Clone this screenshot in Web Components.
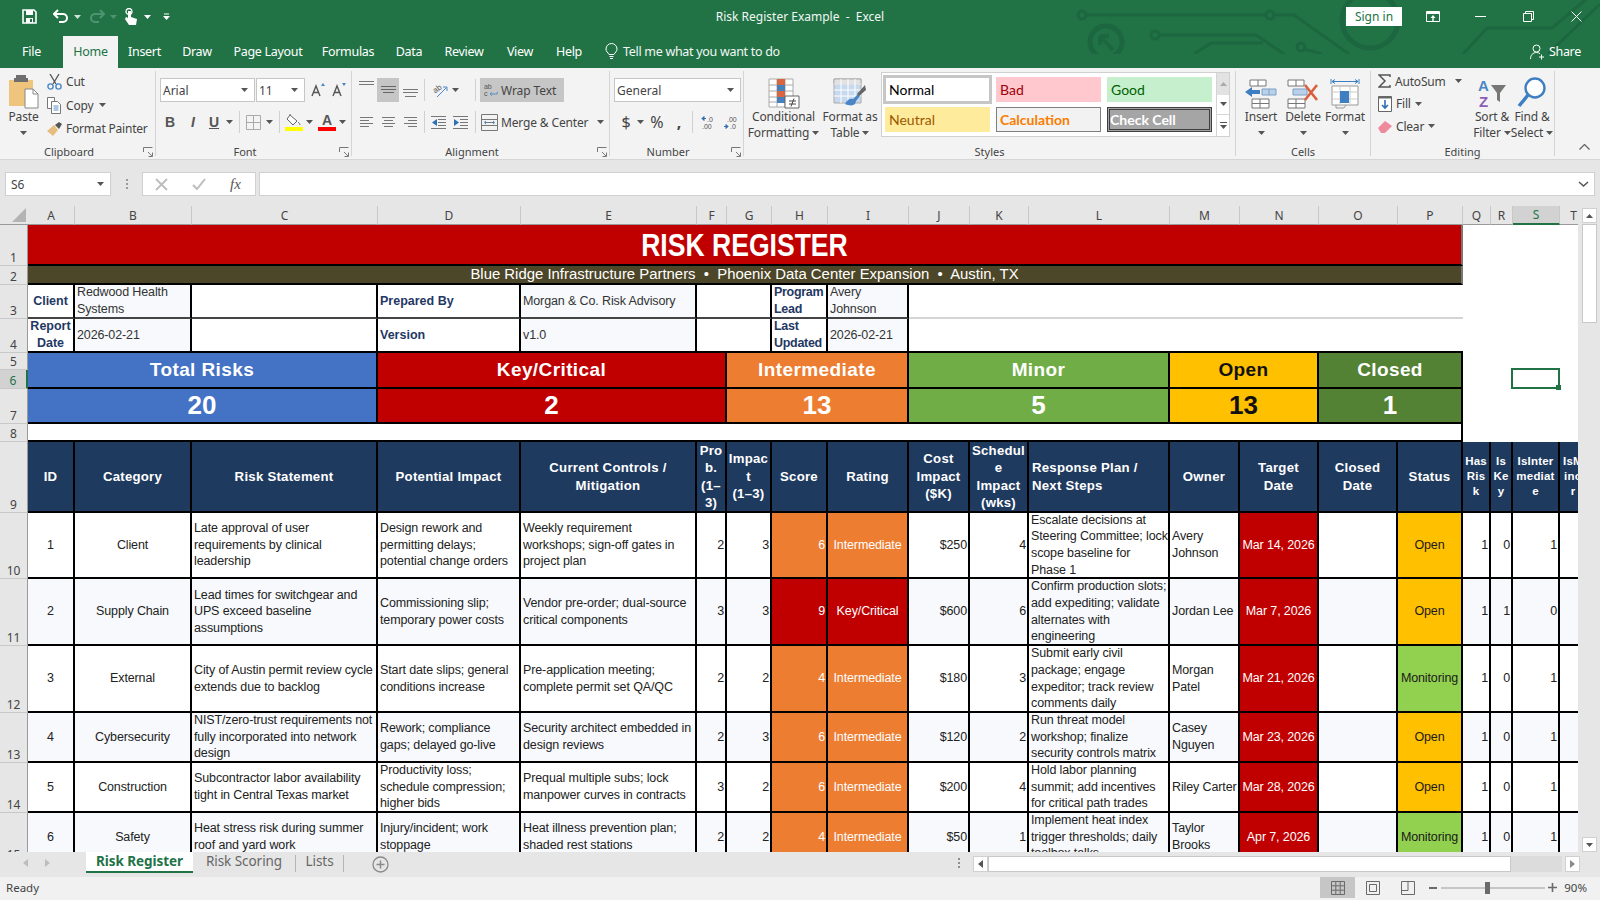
<!DOCTYPE html>
<html lang="en">
<head>
<meta charset="utf-8">
<title>Risk Register Example - Excel</title>
<style>
  html, body { margin: 0; height: 100%; }
  body {
    width: 1600px;
    height: 900px;
    overflow: hidden;
    display: flex;
    flex-direction: column;
    background: #e6e6e6;
    font-family: "Noto Sans", "Liberation Sans", sans-serif;
  }
</style>
</head>
<body>
<excel-header></excel-header>
<excel-ribbon></excel-ribbon>
<excel-formula-bar></excel-formula-bar>
<excel-sheet></excel-sheet>
<excel-sheet-tabs></excel-sheet-tabs>
<excel-status-bar></excel-status-bar>

<script>
const UI_FONT = '"Noto Sans", "Liberation Sans", sans-serif';
const caret = (color = '#555') => `<svg width="7" height="4" viewBox="0 0 7 4"><path d="M0 0h7L3.5 4z" fill="${color}"/></svg>`;

/** Green title row and tab row */
class ExcelHeader extends HTMLElement {
  shadowRoot = this.attachShadow({ mode: 'open' });

  connectedCallback () {
    const tabs = [['File', 63], ['Home', 55], ['Insert', 53], ['Draw', 52], ['Page Layout', 90], ['Formulas', 70], ['Data', 52], ['Review', 58], ['View', 54], ['Help', 44]];
    this.shadowRoot.innerHTML = `
    <style>
      :host { display: block; flex: none; height: 68px; background: #217346; position: relative; color: #fff; font: 12.5px ${UI_FONT}; }
      .pattern { position: absolute; left: 1060px; top: 0; pointer-events: none; }
      .top { height: 33px; display: flex; align-items: center; position: relative; }
      .qat { display: flex; align-items: center; padding-left: 21px; height: 33px; }
      .qat svg { display: block; flex: none; }
      .title { position: absolute; left: 0; right: 0; text-align: center; font-size: 12px; color: #f2f7f4; white-space: pre; }
      .win { margin-left: auto; display: flex; align-items: center; height: 33px; position: relative; }
      .signin { width: 56px; height: 19px; background: #fff; color: #217346; font-size: 12px; line-height: 19px; text-align: center; }
      .win svg { display: block; }
      .tabs { height: 35px; display: flex; position: relative; letter-spacing: -.3px; }
      .tab { height: 32px; margin-top: 3px; padding-bottom: 1px; box-sizing: border-box; display: flex; align-items: center; justify-content: center; }
      .tab.active { background: #f3f3f3; color: #217346; }
      .tell { display: flex; align-items: center; gap: 5px; margin-left: 14px; margin-top: 2px; margin-bottom: 1px; color: #f2f7f4; }
      .share { margin-left: auto; margin-right: 19px; margin-top: 2px; display: flex; align-items: center; gap: 4px; }
    </style>
    <svg class="pattern" width="540" height="54" viewBox="0 0 540 54" fill="none" stroke="#1c673f" stroke-width="3">
      <circle cx="22" cy="15" r="4"/><path d="M26 15H206"/><circle cx="210" cy="15" r="4"/><path d="M214 15H234L289 54"/>
      <circle cx="46" cy="42" r="16" stroke-width="5"/><path d="M40 36L53 50M40 36h9M40 36v9" stroke-width="4"/>
      <circle cx="95" cy="35" r="4"/><path d="M99 35H196L224 54"/><circle cx="241" cy="47" r="4"/><path d="M134 54L151 43H203M244 49L262 54"/>
      <circle cx="310" cy="20" r="28" stroke-width="5"/>
      <path d="M403 54L427 28H492L530 -4M488 54L540 4"/>
    </svg>
    <div class="top">
      <div class="qat">
        <svg width="17" height="17" viewBox="0 0 17 17"><path d="M2 2h11l2 2v11H2z" fill="none" stroke="#fff" stroke-width="1.6"/><path d="M5 2h7v5H5z M5 10h7v5H5z" fill="#fff"/><path d="M9 11h2v3H9z" fill="#217346"/></svg>
        <svg style="margin-left:15px" width="16" height="15" viewBox="0 0 16 15"><path d="M5 1L1 5l4 4M1 5h9a4 4 0 0 1 0 8H6" fill="none" stroke="#fff" stroke-width="2"/></svg>
        <span style="margin-left:5px;display:flex">${caret('#cfe3d7')}</span>
        <svg style="margin-left:8px" width="16" height="15" viewBox="0 0 16 15"><path d="M11 1l4 4-4 4M15 5H6a4 4 0 0 0 0 8h4" fill="none" stroke="#4f9470" stroke-width="2"/></svg>
        <span style="margin-left:5px;display:flex">${caret('#4f9470')}</span>
        <svg style="margin-left:7px" width="14" height="18" viewBox="0 0 14 18"><circle cx="5" cy="3.5" r="3" fill="none" stroke="#fff" stroke-width="1.3"/><path d="M4 3v7L2 9 1 11l4 6h7l1-6-6-2V3z" fill="#fff"/></svg>
        <span style="margin-left:6px;display:flex">${caret('#fff')}</span>
        <svg style="margin-left:12px" width="7" height="7" viewBox="0 0 7 7"><path d="M1 1h5" stroke="#fff"/><path d="M0 3h7L3.5 7z" fill="#fff"/></svg>
      </div>
      <div class="title">Risk Register Example  -  Excel</div>
      <div class="win">
        <div class="signin">Sign in</div>
        <svg style="margin-left:24px" width="14" height="11" viewBox="0 0 14 11"><path d="M.5.5h13v10H.5z" fill="none" stroke="#fff"/><path d="M1 1h12v2H1z" fill="#fff"/><path d="M7 4L4.5 7h1.8v3h1.4V7h1.8z" fill="#fff"/></svg>
        <svg style="margin-left:35px" width="11" height="1" viewBox="0 0 11 1"><path d="M0 .5h11" stroke="#fff"/></svg>
        <svg style="margin-left:37px" width="11" height="11" viewBox="0 0 11 11"><path d="M.5 2.5h8v8h-8zM2.5 2.5v-2h8v8h-2" fill="none" stroke="#fff"/></svg>
        <svg style="margin-left:37px;margin-right:18px" width="11" height="11" viewBox="0 0 11 11"><path d="M.5.5l10 10M10.5.5l-10 10" stroke="#fff" fill="none"/></svg>
      </div>
    </div>
    <div class="tabs">
      ${tabs.map(([label, width]) => `<div class="tab${label === 'Home' ? ' active' : ''}" style="width:${width}px">${label}</div>`).join('')}
      <div class="tell">
        <svg width="13" height="17" viewBox="0 0 13 17"><path d="M4 11.5C3 9.5 1 8.5 1 6a5.5 5.5 0 0 1 11 0c0 2.5-2 3.5-3 5.5z" fill="none" stroke="#fff"/><path d="M4.5 13.5h4M5 15.5h3" stroke="#fff"/></svg>
        <span>Tell me what you want to do</span>
      </div>
      <div class="share">
        <svg width="15" height="16" viewBox="0 0 15 16"><circle cx="6.5" cy="4.5" r="3.5" fill="none" stroke="#fff"/><path d="M.5 15c0-4 2.5-6.5 6-6.5 1.5 0 2.5.5 3.5 1.2M11.5 10.5v5M9 13h5" fill="none" stroke="#fff"/></svg>
        <span>Share</span>
      </div>
    </div>`;
  }
}
customElements.define('excel-header', ExcelHeader);

/** One labelled group of the ribbon */
class RibbonGroup extends HTMLElement {
  shadowRoot = this.attachShadow({ mode: 'open' });

  connectedCallback () {
    const hasLauncher = this.hasAttribute('launcher');
    const launcher = hasLauncher
      ? `<svg class="launch" width="10" height="10" viewBox="0 0 10 10"><path d="M.5 5V.5H9.5M5 5l4 4M9.5 5.5v4h-4" fill="none" stroke="#777"/></svg>`
      : '';
    this.shadowRoot.innerHTML = `
    <style>
      :host { display: flex; flex-direction: column; flex: none; height: 85px; border-right: 1px solid #d4d4d4; box-sizing: border-box; position: relative; }
      .content { height: 72px; flex: none; }
      .label { height: 13px; line-height: 18px; text-align: center; font-size: 11px; color: #444; padding-right: ${hasLauncher ? 17 : 0}px; }
      .launch { position: absolute; right: 2px; bottom: -1px; }
    </style>
    <div class="content"><slot></slot></div>
    <div class="label">${this.getAttribute('label')}</div>
    ${launcher}`;
  }
}
customElements.define('ribbon-group', RibbonGroup);

/** Large ribbon button: icon above one or two lines of text */
class RibbonBigButton extends HTMLElement {
  shadowRoot = this.attachShadow({ mode: 'open' });

  connectedCallback () {
    const lines = this.getAttribute('text').split('|');
    const second = lines[1] !== undefined
      ? `<div class="ln">${lines[1]} ${caret()}</div>`
      : `<div class="ln">${caret()}</div>`;
    this.shadowRoot.innerHTML = `
    <style>
      :host { display: flex; flex-direction: column; align-items: center; flex: none; height: 72px; color: #444; font-size: 12px; letter-spacing: -.15px; }
      .icon { height: 38px; display: flex; align-items: flex-end; justify-content: center; }
      .ln { height: 16px; line-height: 16px; display: flex; gap: 3px; align-items: center; white-space: nowrap; }
    </style>
    <div class="icon"><slot></slot></div>
    <div class="ln">${lines[0]}</div>
    ${second}`;
  }
}
customElements.define('ribbon-big-button', RibbonBigButton);

/** The Home ribbon */
class ExcelRibbon extends HTMLElement {
  shadowRoot = this.attachShadow({ mode: 'open' });

  connectedCallback () {
    this.shadowRoot.innerHTML = this.getStyles() + `
    <ribbon-group label="Clipboard" launcher style="width:156px">
      <div class="clip">
        <ribbon-big-button text="Paste" style="width:47px">
          <svg width="31" height="34" viewBox="0 0 31 34"><path d="M1 5h24v26H1z" fill="#efc47c"/><path d="M8 3h10V0h-10z M6 3h14v4H6z" fill="#6e6e6e"/><path d="M17 14h8l5 5v14H17z" fill="#fff" stroke="#888"/><path d="M25 14v5h5" fill="none" stroke="#888"/></svg>
        </ribbon-big-button>
        <div class="stack" style="margin-top:-1px">
          <div class="row"><svg width="15" height="16" viewBox="0 0 15 16"><path d="M3 0l6 10M12 0L6 10" stroke="#555" stroke-width="1.3" fill="none"/><circle cx="3.5" cy="12.5" r="2.6" fill="none" stroke="#4a86c5" stroke-width="1.4"/><circle cx="11.5" cy="12.5" r="2.6" fill="none" stroke="#4a86c5" stroke-width="1.4"/></svg>Cut</div>
          <div class="row"><svg width="15" height="17" viewBox="0 0 15 17"><path d="M.5.5h7v11h-7z" fill="#fff" stroke="#777"/><path d="M4.5 4.5h6l3 3v9h-9z" fill="#fff" stroke="#777"/><path d="M6.5 9h5M6.5 11h5M6.5 13h5" stroke="#5b8fc7"/></svg>Copy <span class="car" style="margin-left:2px">${caret()}</span></div>
          <div class="row"><svg width="15" height="14" viewBox="0 0 15 14"><path d="M0 9L7 3l4 5-5 6z" fill="#e6bd7d"/><path d="M8 3l4-3 3 2-3 5z" fill="#555"/></svg>Format Painter</div>
        </div>
      </div>
    </ribbon-group>

    <ribbon-group label="Font" launcher style="width:196px">
      <div class="two">
        <div class="line" style="margin-left:4px">
          <div class="combo" style="width:95px">Arial<i>${caret()}</i></div>
          <div class="combo" style="width:49px;margin-left:1px">11<i>${caret()}</i></div>
          <span class="ic" style="margin-left:6px"><svg width="16" height="14" viewBox="0 0 16 14"><path d="M1 13L5 3l4 10M2.5 9.5h5" fill="none" stroke="#555" stroke-width="1.4"/><path d="M10 3l2-3 2 3z" fill="#4a86c5"/></svg></span>
          <span class="ic" style="margin-left:5px"><svg width="16" height="14" viewBox="0 0 16 14"><path d="M1 13L5 3l4 10M2.5 9.5h5" fill="none" stroke="#555" stroke-width="1.4"/><path d="M10 0l2 3 2-3z" fill="#4a86c5"/></svg></span>
        </div>
        <div class="line" style="margin-left:4px">
          <b class="gl" style="margin-left:3px;width:14px">B</b>
          <i class="gl it" style="margin-left:9px;width:14px">I</i>
          <u class="gl" style="margin-left:7px;width:14px">U</u>
          <span class="car" style="margin-left:5px">${caret()}</span>
          <span class="sep" style="margin-left:6px"></span>
          <span style="margin-left:6px;display:flex"><svg width="15" height="15" viewBox="0 0 15 15"><path d="M.5.5h14v14H.5zM7.5.5v14M.5 7.5h14" fill="none" stroke="#aaa"/></svg></span>
          <span class="car" style="margin-left:5px">${caret()}</span>
          <span class="sep" style="margin-left:6px"></span>
          <span class="stacked" style="margin-left:5px;width:18px"><svg width="16" height="12" viewBox="0 0 16 12"><path d="M4 1l7 6-4 4-6-6zM4 1V0M12 8c1 1 2 2 2 3" fill="#fff" stroke="#666"/></svg><em style="background:#ff0"></em></span>
          <span class="car" style="margin-left:3px">${caret()}</span>
          <span class="stacked" style="margin-left:5px;width:18px"><b style="font:bold 14px/12px 'Liberation Sans';color:#555;height:12px">A</b><em style="background:#f00"></em></span>
          <span class="car" style="margin-left:3px">${caret()}</span>
        </div>
      </div>
    </ribbon-group>

    <ribbon-group label="Alignment" launcher style="width:258px">
      <div class="two">
        <div class="line" style="margin-left:3px">
          <span class="cell-ic"><svg width="15" height="10" viewBox="0 0 15 10" style="margin-bottom:8px"><path d="M0 .5h15M0 3.5h15" stroke="#777"/></svg></span>
          <span class="cell-ic on"><svg width="15" height="10" viewBox="0 0 15 10"><path d="M0 1.5h15M0 4.5h15M2 7.5h11" stroke="#666"/></svg></span>
          <span class="cell-ic"><svg width="15" height="10" viewBox="0 0 15 10" style="margin-top:6px"><path d="M0 1.5h15M0 4.5h15M2 8.5h11" stroke="#777"/></svg></span>
          <span class="sep" style="margin-left:3px"></span>
          <span style="margin-left:6px;display:flex"><svg width="17" height="15" viewBox="0 0 17 15" overflow="visible"><text x="3" y="9" font-size="8" fill="#555" font-family="Liberation Sans" transform="rotate(-35 6 8)">ab</text><path d="M6 14L15 5M12 4h4v4" stroke="#4a86c5" fill="none"/></svg></span>
          <span class="car" style="margin-left:4px">${caret()}</span>
          <span class="sep" style="margin-left:16px"></span>
          <div class="wrap">
            <svg width="15" height="16" viewBox="0 0 17 16"><text x="0" y="6.5" font-size="8" fill="#555" font-family="Liberation Sans">ab</text><text x="0" y="15" font-size="8" fill="#555" font-family="Liberation Sans">c</text><path d="M15 10v2.5H7M9 10.5l-2 2 2 2" stroke="#4a86c5" fill="none"/></svg>
            Wrap Text
          </div>
        </div>
        <div class="line" style="margin-left:3px">
          <span class="cell-ic"><svg width="15" height="11" viewBox="0 0 15 11"><path d="M1 .5h13M1 3.5h9M1 6.5h13M1 9.5h9" stroke="#777"/></svg></span>
          <span class="cell-ic"><svg width="15" height="11" viewBox="0 0 15 11"><path d="M1 .5h13M3 3.5h9M1 6.5h13M3 9.5h9" stroke="#777"/></svg></span>
          <span class="cell-ic"><svg width="15" height="11" viewBox="0 0 15 11"><path d="M1 .5h13M5 3.5h9M1 6.5h13M5 9.5h9" stroke="#777"/></svg></span>
          <span class="sep" style="margin-left:3px"></span>
          <span style="margin-left:6px;display:flex"><svg width="15" height="13" viewBox="0 0 15 13"><path d="M0 .5h15M7 3.5h8M7 6.5h8M7 9.5h8M0 12.5h15" stroke="#777"/><path d="M6 3v7L1 6.5z" fill="#2f6fb3"/></svg></span>
          <span style="margin-left:7px;display:flex"><svg width="15" height="13" viewBox="0 0 15 13"><path d="M0 .5h15M7 3.5h8M7 6.5h8M7 9.5h8M0 12.5h15" stroke="#777"/><path d="M1 3v7L6 6.5z" fill="#2f6fb3"/></svg></span>
          <span class="sep" style="margin-left:7px"></span>
          <span style="margin-left:5px;display:flex"><svg width="17" height="17" viewBox="0 0 17 17"><path d="M.5.5h16v16H.5zM.5 5.5h16M.5 11.5h16M4 8.5h9" fill="none" stroke="#777"/><path d="M3 8.5l2-2v4zM14 8.5l-2-2v4z" fill="#4a86c5"/></svg></span>
          <span class="txt" style="margin-left:3px">Merge &amp; Center</span>
          <span class="car" style="margin-left:9px">${caret()}</span>
        </div>
      </div>
    </ribbon-group>

    <ribbon-group label="Number" launcher style="width:134px">
      <div class="two">
        <div class="line" style="margin-left:4px"><div class="combo" style="width:127px">General<i>${caret()}</i></div></div>
        <div class="line" style="margin-left:9px">
          <span class="sym" style="width:14px">$</span><span class="car" style="margin-left:4px">${caret()}</span>
          <span class="sym" style="margin-left:5px;width:16px">%</span>
          <span class="sym" style="margin-left:9px;width:10px;font-weight:700">,</span>
          <span class="sep" style="margin-left:8px"></span>
          <span style="margin-left:8px;display:flex"><svg width="14" height="15" viewBox="0 0 14 15"><path d="M5 3.5H1M1 3.5l2-2v4z" stroke="#2f6fb3" fill="#2f6fb3"/><text x="6" y="7" font-size="7" fill="#555" font-family="Liberation Sans">.0</text><text x="1" y="14" font-size="7" fill="#555" font-family="Liberation Sans">.00</text></svg></span>
          <span style="margin-left:9px;display:flex"><svg width="14" height="15" viewBox="0 0 14 15"><text x="3" y="7" font-size="7" fill="#555" font-family="Liberation Sans">.00</text><path d="M0 11.5h4M4 11.5l-2-2v4z" stroke="#2f6fb3" fill="#2f6fb3"/><text x="6" y="14" font-size="7" fill="#555" font-family="Liberation Sans">.0</text></svg></span>
        </div>
      </div>
    </ribbon-group>

    <ribbon-group label="Styles" style="width:492px">
      <div class="styles">
        <ribbon-big-button text="Conditional|Formatting" style="width:77px">
          <svg width="32" height="31" viewBox="0 0 32 31"><path d="M1 1h24v28H1zM9 1v28M17 1v28M1 7h24M1 13h24M1 19h24M1 24h24" fill="#fff" stroke="#aaa"/><path d="M9 1h8v6H9z" fill="#d9663f"/><path d="M9 7h8v6H9z" fill="#4a7fbd"/><path d="M9 13h8v6H9z" fill="#d9663f"/><path d="M9 19h8v6H9z" fill="#4a7fbd"/><path d="M17 18h14v12H17z" fill="#fff" stroke="#666"/><path d="M21 23h7M21 26h7M26 20.5l-3 8" stroke="#444" fill="none"/></svg>
        </ribbon-big-button>
        <ribbon-big-button text="Format as|Table" style="width:56px">
          <svg width="34" height="31" viewBox="0 0 34 31"><path d="M1 1h27v24H1z" fill="#c6d9ef" stroke="#aaa"/><path d="M1 1h27v5H1z" fill="#e2e2e2" stroke="#aaa"/><path d="M8 1v24M15 1v24M22 1v24M1 6h27M1 12h27M1 18h27" stroke="#fff" fill="none"/><path d="M12 26c2-5 6-6 8-5l5-5 2 2-4 5c0 4-4 6-11 3z" fill="#4a86c5"/><path d="M24 16l8-9 1 5-7 6z" fill="#666"/></svg>
        </ribbon-big-button>
        <div class="gallery">
          <div class="grid">
            <div class="st normal">Normal</div><div class="st bad">Bad</div><div class="st good">Good</div>
            <div class="st neutral">Neutral</div><div class="st calc">Calculation</div><div class="st check">Check Cell</div>
          </div>
          <div class="scroller">
            <div style="height:23px;background:#e2e2e2"><svg width="7" height="4" viewBox="0 0 7 4"><path d="M0 4h7L3.5 0z" fill="#aaa"/></svg></div>
            <div style="height:19px">${caret()}</div>
            <div style="height:22px;border-top:1px solid #d4d4d4"><svg width="7" height="7" viewBox="0 0 7 7"><path d="M0 .5h7" stroke="#555"/><path d="M0 3h7L3.5 7z" fill="#555"/></svg></div>
          </div>
        </div>
      </div>
    </ribbon-group>

    <ribbon-group label="Cells" style="width:135px">
      <div class="bigs" style="padding-left:4px">
        <ribbon-big-button text="Insert" style="width:42px">
          <svg width="32" height="30" viewBox="0 0 32 30"><path d="M5 1h16v6H5zM13 1v6M7 20h17v9H7zM15 20v9M7 24.5h17" fill="#fff" stroke="#777"/><path d="M17 10h14v6H17zM24 10v6" fill="#b9d0ea" stroke="#7f9fc4"/><path d="M0 13l7-5v3h8v4H7v3z" fill="#3e7fc1"/></svg>
        </ribbon-big-button>
        <ribbon-big-button text="Delete" style="width:42px">
          <svg width="32" height="30" viewBox="0 0 32 30"><path d="M1 1h16v6H1zM9 1v6M1 20h17v9H1zM9 20v9M1 24.5h17" fill="#fff" stroke="#777"/><path d="M6 10h14v6H6z" fill="#b9d0ea" stroke="#7f9fc4"/><path d="M18 6l12 15M30 6L18 21" stroke="#d9603b" stroke-width="2.6" fill="none"/></svg>
        </ribbon-big-button>
        <ribbon-big-button text="Format" style="width:42px">
          <svg width="30" height="31" viewBox="0 0 30 31"><path d="M1 1v5M29 1v5" stroke="#3e7fc1"/><path d="M2 3.5h26M5 1.5L2 3.5l3 2M25 1.5l3 2-3 2" stroke="#3e7fc1" fill="none"/><path d="M2 8h26v19H2z" fill="#fff" stroke="#999"/><path d="M2 14h26M2 21h26M10 8v19M20 8v19" stroke="#ccc"/><path d="M10 13h9v12h-9z" fill="#3e7fc1"/><path d="M6 27v3h8l2-3" fill="none" stroke="#999"/></svg>
        </ribbon-big-button>
      </div>
    </ribbon-group>

    <ribbon-group label="Editing" style="width:184px">
      <div class="editing">
        <div class="stack" style="width:91px;padding-left:7px;margin-top:-1px">
          <div class="row" style="height:22.5px"><svg width="13" height="14" viewBox="0 0 13 14"><path d="M12 3V1H1l6 6-6 6h11v-2" fill="none" stroke="#555" stroke-width="1.5"/></svg>AutoSum<span class="car" style="margin-left:5px">${caret()}</span></div>
          <div class="row" style="height:22.5px"><svg width="14" height="16" viewBox="0 0 14 16"><path d="M.5.5h13v15H.5z" fill="#fff" stroke="#666"/><path d="M.5.5h13v2H.5z" fill="#666"/><path d="M7 4v8M4 9l3 3 3-3" fill="none" stroke="#2f6fb3" stroke-width="1.6"/></svg>Fill<span class="car">${caret()}</span></div>
          <div class="row" style="height:22.5px"><svg width="14" height="13" viewBox="0 0 14 13"><path d="M0 8l7-7 7 5-7 7H3z" fill="#ee8a9c"/></svg>Clear<span class="car">${caret()}</span></div>
        </div>
        <ribbon-big-button text="Sort &amp;|Filter" style="width:44px;margin-left:2px">
          <svg width="30" height="31" viewBox="0 0 30 31"><text x="1" y="13" font-size="15" font-weight="700" fill="#4a86c5" font-family="Liberation Sans">A</text><text x="2" y="29" font-size="15" font-weight="700" fill="#8e5cb5" font-family="Liberation Sans">Z</text><path d="M14 7h15l-6 8v9l-3-2v-7z" fill="#777"/></svg>
        </ribbon-big-button>
        <ribbon-big-button text="Find &amp;|Select" style="width:44px;margin-left:-4px">
          <svg width="30" height="32" viewBox="0 0 30 32"><circle cx="18" cy="11" r="9.5" fill="#fff" stroke="#3e7fc1" stroke-width="2.4"/><path d="M11 18L2 29" stroke="#3e7fc1" stroke-width="3.5"/></svg>
        </ribbon-big-button>
      </div>
    </ribbon-group>

    <div class="collapse"><svg width="11" height="6" viewBox="0 0 11 6"><path d="M.5 5.5l5-5 5 5" fill="none" stroke="#666" stroke-width="1.3"/></svg></div>`;
  }

  getStyles () {
    return `
    <style>
      :host { display: flex; flex: none; height: 92px; padding-top: 3px; box-sizing: border-box; background: #f3f3f3; border-bottom: 1px solid #d6d6d6; font: 12px ${UI_FONT}; color: #444; }
      svg { display: block; flex: none; }
      .clip { display: flex; }
      .stack { display: flex; flex-direction: column; letter-spacing: -.2px; }
      .row { height: 23.5px; display: flex; align-items: center; gap: 4px; white-space: nowrap; }
      .two { padding-top: 7px; display: flex; flex-direction: column; gap: 10px; }
      .line { display: flex; align-items: center; height: 24px; }
      .line + .line { height: 20px; }
      .combo { height: 24px; box-sizing: border-box; background: #fff; border: 1px solid #c6c6c6; padding-left: 2px; display: flex; align-items: center; justify-content: space-between; padding-right: 6px; }
      .combo i { display: flex; }
      .car { display: flex; align-items: center; }
      .sep { width: 1px; height: 22px; background: #d0d0d0; flex: none; }
      .ic { display: flex; }
      .gl { font: bold 14px/20px "Liberation Sans", sans-serif; text-align: center; color: #555; display: block; }
      .it { font-style: italic; font-weight: 700; }
      .stacked { display: flex; flex-direction: column; align-items: center; }
      .stacked em { display: block; width: 18px; height: 4px; margin-top: 1px; }
      .cell-ic { width: 22px; height: 24px; display: flex; align-items: center; justify-content: center; flex: none; }
      .line + .line .cell-ic { height: 20px; }
      .cell-ic.on { background: #c6c6c6; }
      .wrap { width: 84px; height: 24px; margin-left: 4px; background: #c6c6c6; display: flex; align-items: center; gap: 2px; padding-left: 4px; box-sizing: border-box; letter-spacing: -.1px; }
      .txt { white-space: nowrap; letter-spacing: -.15px; }
      .sym { font-size: 16px; line-height: 20px; text-align: center; display: block; }
      .styles { display: flex; align-items: flex-start; padding-left: 1px; }
      .gallery { margin-left: 3px; margin-top: 1px; width: 349px; height: 65px; box-sizing: border-box; border: 1px solid #d0d0d0; background: #fff; display: flex; }
      .grid { width: 334px; padding: 4px 3px; box-sizing: border-box; display: grid; grid-template-columns: 105px 105px 105px; column-gap: 6px; grid-template-rows: 25px 25px; row-gap: 5px; }
      .st { font: 14px/25px Lato, "Liberation Sans", sans-serif; padding-left: 4px; box-sizing: border-box; white-space: nowrap; }
      .normal { color: #000; outline: 3px solid #c6c6c6; outline-offset: -1px; }
      .bad { background: #ffc7ce; color: #9c0006; }
      .good { background: #c6efce; color: #006100; }
      .neutral { background: #ffeb9c; color: #9c5700; }
      .calc { background: #f2f2f2; border: 1px solid #7f7f7f; color: #fa7d00; font-weight: 700; line-height: 23px; padding-left: 3px; }
      .check { background: #a5a5a5; border: 3px double #3f3f3f; color: #fff; font-weight: 700; line-height: 19px; padding-left: 0; }
      .scroller { flex: 1; border-left: 1px solid #d4d4d4; display: flex; flex-direction: column; }
      .scroller div { display: flex; align-items: center; justify-content: center; }
      .bigs, .editing { display: flex; }
      .collapse { margin-left: 24px; margin-top: 73px; height: 10px; }
    </style>`;
  }
}
customElements.define('excel-ribbon', ExcelRibbon);

/** Name box and formula input */
class ExcelFormulaBar extends HTMLElement {
  shadowRoot = this.attachShadow({ mode: 'open' });

  connectedCallback () {
    this.shadowRoot.innerHTML = `
    <style>
      :host { display: flex; flex: none; height: 46px; padding: 12px 5px 10px 5px; box-sizing: border-box; background: #e6e6e6; font: 12px ${UI_FONT}; color: #444; }
      .box { background: #fff; border: 1px solid #d0d0d0; box-sizing: border-box; height: 24px; display: flex; align-items: center; }
      svg { display: block; flex: none; }
      .name { width: 106px; padding: 0 6px 0 5px; justify-content: space-between; }
      .dots { width: 31px; display: flex; flex-direction: column; align-items: center; justify-content: center; gap: 2px; }
      .dots span { width: 2px; height: 2px; background: #9a9a9a; }
      .fx { width: 114px; display: flex; gap: 0; }
      .fx span { width: 37px; display: flex; justify-content: center; align-items: center; }
      .input { flex: 1; margin-left: 3px; justify-content: flex-end; padding-right: 5px; }
    </style>
    <div class="box name"><span>S6</span>${caret()}</div>
    <div class="dots"><span></span><span></span><span></span></div>
    <div class="box fx">
      <span><svg width="13" height="13" viewBox="0 0 13 13"><path d="M1 1l11 11M12 1L1 12" stroke="#bdbdbd" stroke-width="1.8"/></svg></span>
      <span><svg width="14" height="12" viewBox="0 0 14 12"><path d="M1 7l4 4 8-10" fill="none" stroke="#bdbdbd" stroke-width="2"/></svg></span>
      <span style="font:italic 15px 'Liberation Serif',serif;color:#555">fx</span>
    </div>
    <div class="box input"><svg width="11" height="6" viewBox="0 0 11 6"><path d="M1 1l4.5 4L10 1" fill="none" stroke="#555" stroke-width="1.5"/></svg></div>`;
  }
}
customElements.define('excel-formula-bar', ExcelFormulaBar);

/** The worksheet grid */
class ExcelSheet extends HTMLElement {
  shadowRoot = this.attachShadow({ mode: 'open' });

  connectedCallback () {
    const colEdges = [28, 75, 192, 378, 521, 697, 727, 772, 828, 909, 970, 1029, 1170, 1240, 1319, 1398, 1463, 1491, 1513, 1560, 1588];
    const rowEdges = [19, 60, 79, 113, 147, 164, 183, 218, 236, 307, 373, 440, 507, 557, 607, 657];
    const colTemplate = ['28px'].concat(colEdges.slice(1).map((e, i) => `${e - colEdges[i]}px`)).join(' ');
    const rowTemplate = ['19px'].concat(rowEdges.slice(1).map((e, i) => `${e - rowEdges[i]}px`)).join(' ');
    const letters = 'ABCDEFGHIJKLMNOPQRST'.split('');
    const col = c => letters.indexOf(c) + 2;

    let html = '<div class="corner"><svg width="14" height="14" viewBox="0 0 14 14"><path d="M14 0v14H0z" fill="#b4b4b4"/></svg></div>';
    letters.forEach(l => {
      html += `<div class="colh${l === 'S' ? ' sel' : ''}" style="grid-column:${col(l)};grid-row:1">${l}</div>`;
    });
    for (let r = 1; r <= 15; r++) {
      html += `<div class="rowh${r === 6 ? ' sel' : ''}" style="grid-column:1;grid-row:${r + 1}">${r}</div>`;
    }

    // from, to, row, to row, class, text
    const cell = (a, b, r, r2, cls, text = '') => {
      html += `<div class="c ${cls}" style="grid-column:${col(a)}/${col(b) + 1};grid-row:${r + 1}/${r2 + 2}"><span>${text}</span></div>`;
    };

    cell('A', 'P', 1, 1, 'title', '<span class="big">RISK REGISTER</span>');
    cell('A', 'P', 2, 2, 'sub', 'Blue Ridge Infrastructure Partners &nbsp;•&nbsp; Phoenix Data Center Expansion &nbsp;•&nbsp; Austin, TX');

    [[3, 'Client', 'Redwood Health<br>Systems', 'Prepared By', 'Morgan &amp; Co. Risk Advisory', 'Program<br>Lead', 'Avery<br>Johnson'],
      [4, 'Report<br>Date', '2026-02-21', 'Version', 'v1.0', 'Last<br>Updated', '2026-02-21']].forEach(([r, a, b, d, e, h, i]) => {
      const line = r === 3 ? ' gl' : '';
      cell('A', 'A', r, r, `lab ctr${line}`, a);
      cell('B', 'B', r, r, `val${line}`, b);
      cell('C', 'C', r, r, `pl${line}`);
      cell('D', 'D', r, r, `lab${line}`, d);
      cell('E', 'E', r, r, `val${line}`, e);
      cell('F', 'G', r, r, `pl${line}`);
      cell('H', 'H', r, r, `lab tight${line}`, h);
      cell('I', 'I', r, r, `val${line}`, i);
      cell('J', 'P', r, r, r === 3 ? 'pl soft' : 'pl nr');
    });

    [['A', 'C', 'blue', 'Total Risks', '20'], ['D', 'F', 'red', 'Key/Critical', '2'], ['G', 'I', 'orange', 'Intermediate', '13'],
      ['J', 'L', 'green', 'Minor', '5'], ['M', 'N', 'yellow', 'Open', '13'], ['O', 'P', 'dgreen', 'Closed', '1']].forEach(([a, b, tone, label, value]) => {
      cell(a, b, 5, 6, `kpi ${tone}`, label);
      cell(a, b, 7, 7, `num ${tone}`, value);
    });

    cell('A', 'P', 8, 8, 'gap');
    cell('Q', 'T', 1, 8, 'none');

    const heads = ['ID', 'Category', 'Risk Statement', 'Potential Impact', 'Current Controls /<br>Mitigation', 'Pro<br>b.<br>(1–<br>3)', 'Impac<br>t<br>(1–3)', 'Score', 'Rating',
      'Cost<br>Impact<br>($K)', 'Schedul<br>e<br>Impact<br>(wks)', 'Response Plan /<br>Next Steps', 'Owner', 'Target<br>Date', 'Closed<br>Date', 'Status', 'Has<br>Ris<br>k', 'Is<br>Ke<br>y', 'IsInter<br>mediat<br>e', 'IsM<br>ino<br>r'];
    heads.forEach((h, i) => {
      const l = letters[i];
      cell(l, l, 9, 9, `hd${i > 15 ? ' sm' : ''}${l === 'L' ? ' lft' : ''}`, h);
    });

    const rows = [
      ['1', 'Client', 'Late approval of user<br>requirements by clinical<br>leadership', 'Design rework and<br>permitting delays;<br>potential change orders', 'Weekly requirement<br>workshops; sign-off gates in<br>project plan', '2', '3', '6', 'Intermediate', '$250', '4', 'Escalate decisions at<br>Steering Committee; lock<br>scope baseline for<br>Phase 1', 'Avery<br>Johnson', 'Mar 14, 2026', 'Open', '1', '0', '1', '0'],
      ['2', 'Supply Chain', 'Lead times for switchgear and<br>UPS exceed baseline<br>assumptions', 'Commissioning slip;<br>temporary power costs', 'Vendor pre-order; dual-source<br>critical components', '3', '3', '9', 'Key/Critical', '$600', '6', 'Confirm production slots;<br>add expediting; validate<br>alternates with<br>engineering', 'Jordan Lee', 'Mar 7, 2026', 'Open', '1', '1', '0', '0'],
      ['3', 'External', 'City of Austin permit review cycle<br>extends due to backlog', 'Start date slips; general<br>conditions increase', 'Pre-application meeting;<br>complete permit set QA/QC', '2', '2', '4', 'Intermediate', '$180', '3', 'Submit early civil<br>package; engage<br>expeditor; track review<br>comments daily', 'Morgan<br>Patel', 'Mar 21, 2026', 'Monitoring', '1', '0', '1', '0'],
      ['4', 'Cybersecurity', 'NIST/zero-trust requirements not<br>fully incorporated into network<br>design', 'Rework; compliance<br>gaps; delayed go-live', 'Security architect embedded in<br>design reviews', '2', '3', '6', 'Intermediate', '$120', '2', 'Run threat model<br>workshop; finalize<br>security controls matrix', 'Casey<br>Nguyen', 'Mar 23, 2026', 'Open', '1', '0', '1', '0'],
      ['5', 'Construction', 'Subcontractor labor availability<br>tight in Central Texas market', 'Productivity loss;<br>schedule compression;<br>higher bids', 'Prequal multiple subs; lock<br>manpower curves in contracts', '3', '2', '6', 'Intermediate', '$200', '4', 'Hold labor planning<br>summit; add incentives<br>for critical path trades', 'Riley Carter', 'Mar 28, 2026', 'Open', '1', '0', '1', '0'],
      ['6', 'Safety', 'Heat stress risk during summer<br>roof and yard work', 'Injury/incident; work<br>stoppage', 'Heat illness prevention plan;<br>shaded rest stations', '2', '2', '4', 'Intermediate', '$50', '1', 'Implement heat index<br>trigger thresholds; daily<br>toolbox talks', 'Taylor<br>Brooks', 'Apr 7, 2026', 'Monitoring', '1', '0', '1', '0']
    ];
    rows.forEach((d, i) => {
      const r = 10 + i;
      const alt = i % 2 ? ' alt' : '';
      const tone = d[8] === 'Key/Critical' ? 'red' : 'orange';
      const status = d[14] === 'Open' ? 'yellow' : 'mon';
      cell('A', 'A', r, r, `d ctr${alt}`, d[0]);
      cell('B', 'B', r, r, `d ctr${alt}`, d[1]);
      cell('C', 'C', r, r, `d${alt}`, d[2]);
      cell('D', 'D', r, r, `d${alt}`, d[3]);
      cell('E', 'E', r, r, `d${alt}`, d[4]);
      cell('F', 'F', r, r, `d rt${alt}`, d[5]);
      cell('G', 'G', r, r, `d rt${alt}`, d[6]);
      cell('H', 'H', r, r, `d rt ${tone}`, d[7]);
      cell('I', 'I', r, r, `d ctr ${tone}`, d[8]);
      cell('J', 'J', r, r, `d rt${alt}`, d[9]);
      cell('K', 'K', r, r, `d rt${alt}`, d[10]);
      cell('L', 'L', r, r, `d${alt}`, d[11]);
      cell('M', 'M', r, r, `d${alt}`, d[12]);
      cell('N', 'N', r, r, 'd ctr red', d[13]);
      cell('O', 'O', r, r, `d${alt}`);
      cell('P', 'P', r, r, `d ctr ${status}`, d[14]);
      cell('Q', 'Q', r, r, `d rt${alt}`, d[15]);
      cell('R', 'R', r, r, `d rt${alt}`, d[16]);
      cell('S', 'S', r, r, `d rt${alt}`, d[17]);
      cell('T', 'T', r, r, `d rt${alt}`, d[18]);
    });

    this.shadowRoot.innerHTML = `
    <style>
      :host { display: flex; flex: none; height: 646px; background: #e6e6e6; }
      .view { width: 1578px; flex: none; height: 646px; overflow: hidden; position: relative; }
      .grid { display: grid; grid-template-columns: ${colTemplate}; grid-template-rows: ${rowTemplate}; background: #fff; font: 12.5px/16.6px "Liberation Sans", Arial, sans-serif; color: #222; }
      .corner { grid-column: 1; grid-row: 1; background: #e6e6e6; display: flex; align-items: flex-end; justify-content: flex-end; padding: 0 2px 2px 0; border-bottom: 1px solid #9a9a9a; box-sizing: border-box; overflow: hidden; }
      .colh, .rowh { background: #e6e6e6; color: #444; font: 12px ${UI_FONT}; box-sizing: border-box; display: flex; overflow: hidden; }
      .colh { align-items: center; justify-content: center; border-right: 1px solid #c8c8c8; border-bottom: 1px solid #9a9a9a; }
      .rowh { align-items: flex-end; justify-content: center; border-right: 1px solid #9a9a9a; border-bottom: 1px solid #c8c8c8; line-height: 15px; }
      .colh.sel { background: #d2d2d2; color: #217346; border-bottom: 2px solid #217346; }
      .rowh.sel { background: #d2d2d2; color: #217346; border-right: 2px solid #217346; }
      .c { box-sizing: border-box; border-right: 2px solid #000; border-bottom: 2px solid #000; display: flex; align-items: center; overflow: hidden; white-space: nowrap; }
      .c > span { display: block; }
      .none { border: 0; }
      .title { justify-content: center; background: #c00000; color: #fff; border-right: 2px solid #777; }
      .big { display: inline-block; font: bold 32px/38px "Liberation Sans", sans-serif; transform: scaleX(.83); }
      .sub { justify-content: center; background: #4d4729; color: #fff; font-size: 14.9px; border-right: 2px solid #777; }
      .lab { color: #1f3864; font-weight: 700; padding-left: 2px; }
      .tight { letter-spacing: -.3px; }
      .val { background: #f7f9fc; padding-left: 2px; color: #333; letter-spacing: -.12px; }
      .pl { background: #fff; }
      .gl { border-bottom-color: #444; }
      .soft { border-right: 0; border-bottom-color: #d4d4d4; }
      .nr { border-right: 0; }
      .ctr { justify-content: center; text-align: center; padding-left: 0; }
      .kpi { justify-content: center; font: bold 19px "Liberation Sans", sans-serif; letter-spacing: .4px; color: #fff; }
      .num { justify-content: center; font: bold 26px "Liberation Sans", sans-serif; color: #fff; }
      .blue { background: #4472c4; } .red { background: #c00000; color: #fff; } .orange { background: #ed7d31; color: #fff; }
      .green { background: #70ad47; } .yellow { background: #ffc000; color: #1a1a1a; } .dgreen { background: #548235; }
      .mon { background: #92d050; color: #1a1a1a; }
      .kpi.yellow, .num.yellow { color: #111; }
      .gap { background: #fff; }
      .hd { background: #1f3a5f; color: #fff; font: bold 13.2px/17.5px "Liberation Sans", sans-serif; letter-spacing: .25px; justify-content: center; text-align: center; }
      .hd.lft { justify-content: flex-start; text-align: left; padding-left: 3px; }
      .hd.sm { font-size: 11.5px; line-height: 15px; letter-spacing: .2px; }
      .d { padding: 0 2px; letter-spacing: -.12px; }
      .d.ctr { padding: 0; }
      .rt { justify-content: flex-end; text-align: right; padding: 0 1px 0 0; }
      .alt { background: #f7f9fc; }
      .selbox { position: absolute; left: 1511px; top: 162px; width: 49px; height: 21px; box-sizing: border-box; border: 2px solid #217346; }
      .selbox::after { content: ""; position: absolute; right: -3px; bottom: -3px; width: 5px; height: 5px; background: #217346; }
      .vbar { flex: 1; display: flex; flex-direction: column; align-items: center; padding-top: 2px; }
      .vbtn { width: 15px; height: 15px; background: #fff; border: 1px solid #d0d0d0; box-sizing: border-box; display: flex; align-items: center; justify-content: center; }
      .thumb { width: 15px; height: 99px; background: #fff; border: 1px solid #c8c8c8; box-sizing: border-box; }
      .vbtn svg { display: block; }
    </style>
    <div class="view">
      <div class="grid">${html}</div>
      <div class="selbox"></div>
    </div>
    <div class="vbar">
      <div class="vbtn"><svg width="7" height="4" viewBox="0 0 7 4"><path d="M0 4h7L3.5 0z" fill="#555"/></svg></div>
      <div class="thumb" style="margin-top:1px"></div>
      <div class="vbtn" style="margin-top:auto">${caret()}</div>
    </div>`;
  }
}
customElements.define('excel-sheet', ExcelSheet);

/** Worksheet tabs and horizontal scrollbar */
class ExcelSheetTabs extends HTMLElement {
  shadowRoot = this.attachShadow({ mode: 'open' });

  connectedCallback () {
    this.shadowRoot.innerHTML = `
    <style>
      :host { display: flex; flex: none; height: 25px; background: #e6e6e6; font: 13.5px ${UI_FONT}; color: #666; box-sizing: border-box; align-items: flex-start; letter-spacing: -.05px; }
      svg { display: block; flex: none; }
      .nav { width: 86px; height: 21px; display: flex; gap: 17px; padding-left: 23px; box-sizing: border-box; align-items: center; }
      .tab { display: flex; align-items: center; justify-content: center; height: 18px; }
      .tab.active { width: 107px; background: #fff; color: #217346; font-weight: 700; border-bottom: 2px solid #217346; height: 18px; padding-bottom: 1px; }
      .sep { width: 1px; height: 17px; background: #b5b5b5; margin-top: 3px; }
      .add { margin-left: 28px; margin-top: 4px; }
      .dots { margin-left: 569px; display: flex; flex-direction: column; gap: 2px; justify-content: center; height: 21px; }
      .dots span { width: 2px; height: 2px; background: #8e8e8e; }
      .hbar { margin-left: 13px; margin-top: 4px; height: 16px; display: flex; }
      .hbtn { width: 15px; height: 16px; display: flex; align-items: center; justify-content: center; background: #fff; border: 1px solid #d0d0d0; box-sizing: border-box; }
      .track { width: 574px; height: 16px; background: #dcdcdc; }
      .hthumb { width: 523px; height: 16px; background: #fff; border: 1px solid #c8c8c8; box-sizing: border-box; }
    </style>
    <div class="nav">
      <svg width="5" height="8" viewBox="0 0 5 8"><path d="M5 0v8L0 4z" fill="#bdbdbd"/></svg>
      <svg width="5" height="8" viewBox="0 0 5 8"><path d="M0 0v8l5-4z" fill="#bdbdbd"/></svg>
    </div>
    <div class="tab active">Risk Register</div>
    <div class="tab" style="width:102px">Risk Scoring</div>
    <div class="sep"></div>
    <div class="tab" style="width:47px">Lists</div>
    <div class="sep"></div>
    <div class="add"><svg width="17" height="17" viewBox="0 0 17 17"><circle cx="8.5" cy="8.5" r="7.5" fill="none" stroke="#8a8a8a" stroke-width="1.3"/><path d="M8.5 4.5v8M4.5 8.5h8" stroke="#8a8a8a" stroke-width="1.5"/></svg></div>
    <div class="dots"><span></span><span></span><span></span></div>
    <div class="hbar">
      <div class="hbtn"><svg width="5" height="8" viewBox="0 0 5 8"><path d="M5 0v8L0 4z" fill="#555"/></svg></div>
      <div class="track"><div class="hthumb"></div></div>
      <div class="hbtn" style="margin-left:3px"><svg width="5" height="8" viewBox="0 0 5 8"><path d="M0 0v8l5-4z" fill="#8a8a8a"/></svg></div>
    </div>`;
  }
}
customElements.define('excel-sheet-tabs', ExcelSheetTabs);

/** Ready text, view switches and zoom slider */
class ExcelStatusBar extends HTMLElement {
  shadowRoot = this.attachShadow({ mode: 'open' });

  connectedCallback () {
    this.shadowRoot.innerHTML = `
    <style>
      :host { display: flex; flex: none; height: 23px; background: #f1f1f1; align-items: stretch; font: 11.5px ${UI_FONT}; color: #444; }
      svg { display: block; flex: none; }
      .ready { padding-left: 6px; line-height: 22px; }
      .views { margin-left: auto; display: flex; height: 21px; }
      .view { width: 35px; display: flex; align-items: center; justify-content: center; }
      .view.on { background: #c6c6c6; }
      .zoom { display: flex; align-items: center; height: 21px; margin-left: 4px; }
      .slider { width: 104px; height: 2px; background: #c6c6c6; margin: 0 3px 0 4px; position: relative; }
      .slider::after { content: ""; position: absolute; left: 44px; top: -5px; width: 5px; height: 12px; background: #6a6a6a; }
      .pct { margin-left: 7px; margin-right: 13px; }
    </style>
    <div class="ready">Ready</div>
    <div class="views">
      <div class="view on"><svg width="14" height="14" viewBox="0 0 14 14"><path d="M.5.5h13v13H.5zM.5 4.8h13M.5 9.2h13M4.8.5v13M9.2.5v13" fill="none" stroke="#6a6a6a"/></svg></div>
      <div class="view"><svg width="14" height="14" viewBox="0 0 14 14"><path d="M.5.5h13v13H.5zM3.5 3.5h7v7h-7z" fill="none" stroke="#6a6a6a"/></svg></div>
      <div class="view"><svg width="14" height="14" viewBox="0 0 14 14"><path d="M.5.5h13v13H.5zM.5 9.5h6.5V.5" fill="none" stroke="#6a6a6a"/></svg></div>
    </div>
    <div class="zoom">
      <svg width="8" height="2" viewBox="0 0 8 2"><path d="M0 1h8" stroke="#6a6a6a" stroke-width="2"/></svg>
      <div class="slider"></div>
      <svg width="9" height="9" viewBox="0 0 9 9"><path d="M0 4.5h9M4.5 0v9" stroke="#6a6a6a" stroke-width="1.6"/></svg>
      <div class="pct">90%</div>
    </div>`;
  }
}
customElements.define('excel-status-bar', ExcelStatusBar);
</script>
</body>
</html>
